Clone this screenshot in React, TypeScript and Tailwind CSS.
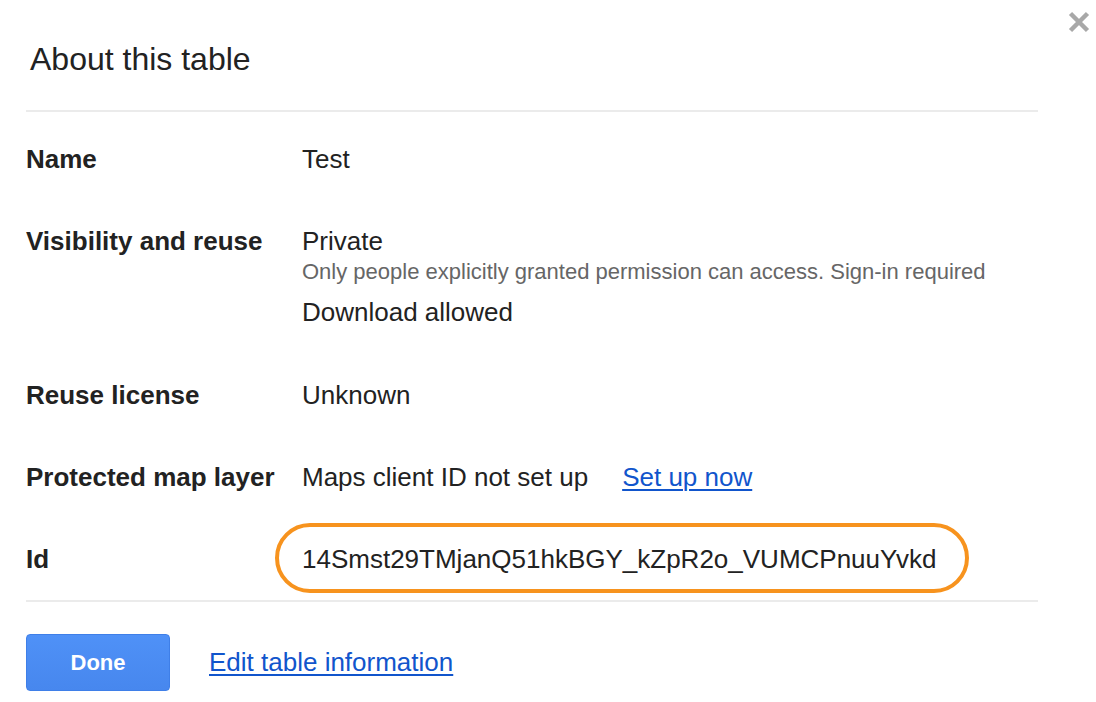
import React from "react";

const F = { fontFamily: '"Liberation Sans", Arial, Helvetica, sans-serif' };

function Row({ label, children, className = "py-[26px]" }: { label: string; children: React.ReactNode; className?: string }) {
  return (
    <div className={`grid grid-cols-[276px_1fr] ${className}`}>
      <div className="text-[26px] leading-[30px] font-bold text-[#222]">{label}</div>
      <div className="text-[26px] leading-[30px] text-[#222]">{children}</div>
    </div>
  );
}

export default function App() {
  return (
    <div style={F} className="relative w-[1096px] h-[702px] bg-white overflow-hidden">
      <button className="absolute left-[1066px] top-[9px] w-[26px] h-[26px] flex items-center justify-center" aria-label="Close">
        <svg width="24" height="24" viewBox="0 0 24 24">
          <path d="M3.5 3.5 L20.5 20.5 M20.5 3.5 L3.5 20.5" stroke="#a8a8a8" strokeWidth="4.5" strokeLinecap="butt" />
        </svg>
      </button>
      <div className="pl-[26px] pr-[58px] pt-[41px]">
        <h1 className="pl-[4px] text-[32px] leading-[37px] text-[#222] font-normal">About this table</h1>
        <div className="mt-[32px] h-[2px] bg-[#ebebeb]" />
        <div className="pt-[6px]">
          <Row label="Name">Test</Row>
          <Row label="Visibility and reuse">
            <div>Private</div>
            <div className="mt-[3px] text-[22px] leading-[26px] text-[#666]">
              Only people explicitly granted permission can access. Sign-in required
            </div>
            <div className="mt-[12px]">Download allowed</div>
          </Row>
          <Row label="Reuse license" className="pt-[27px] pb-[26px]">Unknown</Row>
          <Row label="Protected map layer" className="pt-[26px] pb-[26px]">
            <span>Maps client ID not set up</span>
            <a href="#" className="ml-[34px] text-[#1155cc] underline underline-offset-[3px] decoration-[2px]">Set up now</a>
          </Row>
          <Row label="Id" className="pt-[26px] pb-[26px]">
            <span className="relative inline-block">
              <span className="absolute -left-[27px] -right-[33px] -top-[21px] -bottom-[19px] rounded-full border-[4px] border-[#f7931e]" />
              <span className="relative">14Smst29TMjanQ51hkBGY_kZpR2o_VUMCPnuuYvkd</span>
            </span>
          </Row>
        </div>
        <div className="h-[2px] bg-[#ebebeb]" />
        <div className="mt-[32px] flex items-center">
          <button className="w-[144px] h-[57px] rounded-[4px] border border-[#3f7fe8] bg-gradient-to-b from-[#4f91f7] to-[#4787ee] text-white font-bold text-[22px]">
            Done
          </button>
          <a href="#" className="ml-[39px] -mt-[2px] text-[26px] leading-[30px] text-[#1155cc] underline underline-offset-[3px] decoration-[2px]">
            Edit table information
          </a>
        </div>
      </div>
    </div>
  );
}
